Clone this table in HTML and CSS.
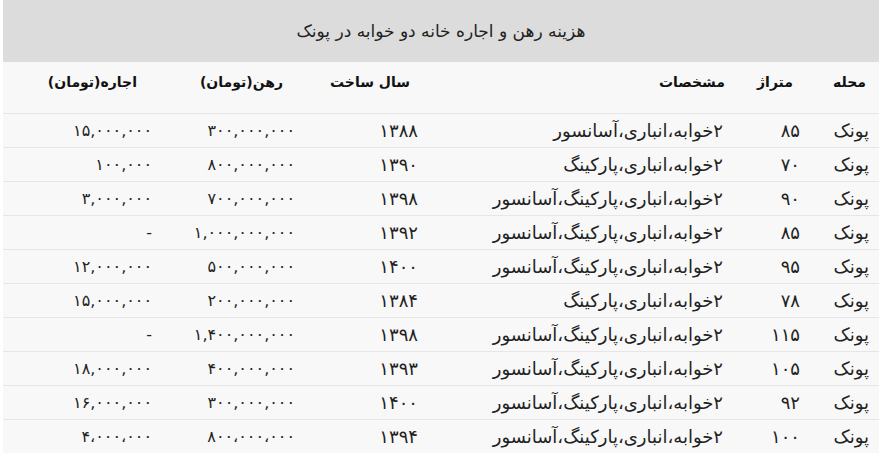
FILE: index.html
```html
<!DOCTYPE html>
<html lang="fa" dir="rtl">
<head>
<meta charset="utf-8">
<link rel="stylesheet" href="styles.css">
</head>
<body>
<div class="wrap">
  <div class="title">هزینه رهن و اجاره خانه دو خوابه در پونک</div>
  <table class="grid">
    <colgroup>
      <col class="c1"><col class="c2"><col class="c3"><col class="c4"><col class="c5"><col class="c6">
    </colgroup>
    <thead>
      <tr>
        <th class="h1">محله</th>
        <th class="h2">متراژ</th>
        <th class="h3">مشخصات</th>
        <th class="h4">سال ساخت</th>
        <th class="h5">رهن(تومان)</th>
        <th class="h6">اجاره(تومان)</th>
      </tr>
    </thead>
    <tbody>
      <tr><td>پونک</td><td>۸۵</td><td>۲خوابه،انباری،آسانسور</td><td>۱۳۸۸</td><td>۳۰۰,۰۰۰,۰۰۰</td><td>۱۵,۰۰۰,۰۰۰</td></tr>
      <tr><td>پونک</td><td>۷۰</td><td>۲خوابه،انباری،پارکینگ</td><td>۱۳۹۰</td><td>۸۰۰,۰۰۰,۰۰۰</td><td>۱۰۰,۰۰۰</td></tr>
      <tr><td>پونک</td><td>۹۰</td><td>۲خوابه،انباری،پارکینگ،آسانسور</td><td>۱۳۹۸</td><td>۷۰۰,۰۰۰,۰۰۰</td><td>۳,۰۰۰,۰۰۰</td></tr>
      <tr><td>پونک</td><td>۸۵</td><td>۲خوابه،انباری،پارکینگ،آسانسور</td><td>۱۳۹۲</td><td>۱,۰۰۰,۰۰۰,۰۰۰</td><td>-</td></tr>
      <tr><td>پونک</td><td>۹۵</td><td>۲خوابه،انباری،پارکینگ،آسانسور</td><td>۱۴۰۰</td><td>۵۰۰,۰۰۰,۰۰۰</td><td>۱۲,۰۰۰,۰۰۰</td></tr>
      <tr><td>پونک</td><td>۷۸</td><td>۲خوابه،انباری،پارکینگ</td><td>۱۳۸۴</td><td>۲۰۰,۰۰۰,۰۰۰</td><td>۱۵,۰۰۰,۰۰۰</td></tr>
      <tr><td>پونک</td><td>۱۱۵</td><td>۲خوابه،انباری،پارکینگ،آسانسور</td><td>۱۳۹۸</td><td>۱,۴۰۰,۰۰۰,۰۰۰</td><td>-</td></tr>
      <tr><td>پونک</td><td>۱۰۵</td><td>۲خوابه،انباری،پارکینگ،آسانسور</td><td>۱۳۹۳</td><td>۴۰۰,۰۰۰,۰۰۰</td><td>۱۸,۰۰۰,۰۰۰</td></tr>
      <tr><td>پونک</td><td>۹۲</td><td>۲خوابه،انباری،پارکینگ،آسانسور</td><td>۱۴۰۰</td><td>۳۰۰,۰۰۰,۰۰۰</td><td>۱۶,۰۰۰,۰۰۰</td></tr>
      <tr><td>پونک</td><td>۱۰۰</td><td>۲خوابه،انباری،پارکینگ،آسانسور</td><td>۱۳۹۴</td><td>۸۰۰،۰۰۰،۰۰۰</td><td>۴،۰۰۰،۰۰۰</td></tr>
    </tbody>
  </table>
</div>
</body>
</html>
```

FILE: styles.css
```css
html, body {
  margin: 0;
  padding: 0;
  background: #ffffff;
}
body {
  font-family: "DejaVu Sans", "Noto Sans", sans-serif;
  color: #222222;
}
.wrap {
  margin-left: 3px;
  width: 876px;
}
.title {
  background: #dcdcdc;
  height: 62px;
  display: flex;
  align-items: center;
  justify-content: center;
  font-size: 17px;
  color: #222222;
}
.grid {
  width: 100%;
  border-collapse: collapse;
  table-layout: fixed;
  background: #f8f8f8;
}
.c1 { width: 69px; }
.c2 { width: 77px; }
.c3 { width: 305px; }
.c4 { width: 123px; }
.c5 { width: 143px; }
.c6 { width: 159px; }
th {
  height: 51px;
  padding: 0 10px 10px 0;
  text-align: right;
  font-size: 14px;
  font-weight: bold;
  color: #111111;
  border-bottom: 1px solid #e6e6e6;
  box-sizing: border-box;
  white-space: nowrap;
}
.h1 { padding-right: 13px; }
.h2 { padding-right: 17px; }
.h3 { padding-right: 8px; }
.h4 { padding-right: 18px; }
.h5 { padding-right: 22px; }
.h6 { padding-right: 25px; }
td {
  height: 34px;
  padding: 0 10px 0 0;
  text-align: right;
  font-size: 18px;
  border-bottom: 1px solid #e6e6e6;
  box-sizing: border-box;
  white-space: nowrap;
}
td:nth-child(5),
td:nth-child(6) {
  font-size: 16px;
}
tbody tr:last-child td {
  border-bottom: none;
}
```
